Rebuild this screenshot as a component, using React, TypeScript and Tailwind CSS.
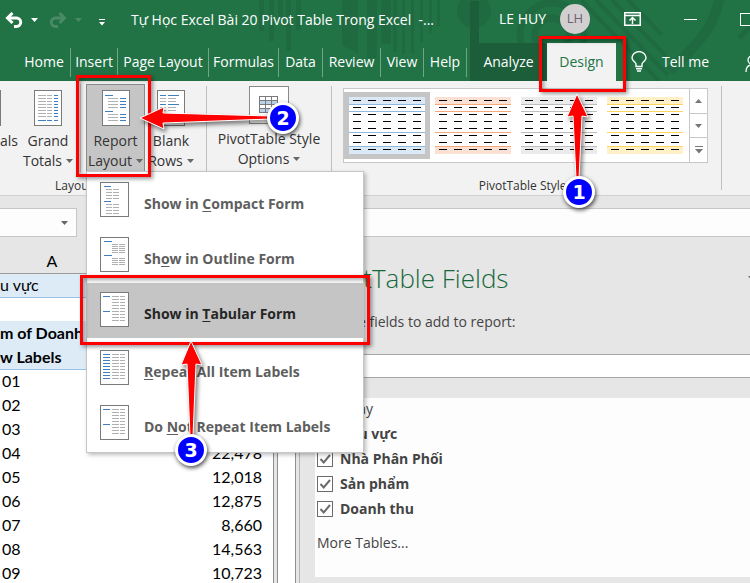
import { useState } from "react";
import type { ReactNode } from "react";
import clsx from "clsx";

type Bar = [x: number, y: number, w: number, blue?: boolean];

const rows = (x: number, w: number, ys: number[], blue = false): Bar[] =>
  ys.map((y) => [x, y, w, blue]);

const grandTotals: Bar[] = [
  ...rows(4, 8, [5, 8, 11, 14, 17, 20, 23, 26]),
  ...rows(13, 5, [5, 8, 11, 14, 17, 20, 23, 26]),
  ...rows(20, 4, [5, 8, 11, 14, 17, 20, 23, 26, 30], true),
  [4, 30, 8, true],
  [13, 30, 5, true],
];

const reportLayout: Bar[] = [
  [3, 5, 8, true],
  [3, 21, 8, true],
  ...rows(6, 10, [8, 11, 14, 17, 24, 27, 30]),
  ...rows(18, 6, [8, 11, 14, 17, 24, 27, 30], true),
];

const blankRows: Bar[] = [
  ...rows(3, 6, [5, 14], true),
  ...rows(11, 11, [5, 14], true),
  ...rows(3, 6, [8, 11, 17, 20, 26, 29]),
  ...rows(11, 8, [8, 11, 17, 20, 26, 29]),
];

const compact: Bar[] = [
  [4, 4, 7, true],
  [4, 19, 7, true],
  ...rows(6, 6, [7, 10, 13, 16, 22, 25, 28, 31]),
  ...rows(13, 6, [7, 10, 13, 16, 22, 25, 28, 31]),
];

const outline: Bar[] = [
  [4, 4, 8, true],
  [4, 18, 8, true],
  ...rows(12, 6, [7, 9, 11, 13, 15, 21, 23, 25, 27]),
  ...rows(19, 6, [7, 9, 11, 13, 15, 21, 23, 25, 27]),
];

const tabularYs = [4, 7, 10, 13, 16, 19, 22, 25, 28];

const tabular: Bar[] = [
  [3, 4, 7, true],
  [3, 19, 7, true],
  ...rows(12, 7, tabularYs),
  ...rows(20, 5, tabularYs),
];

const repeatAll: Bar[] = [
  ...rows(3, 7, tabularYs, true),
  ...rows(12, 7, tabularYs),
  ...rows(20, 5, tabularYs),
];

function SheetIcon({ bars, w = 28, h = 36 }: { bars: Bar[]; w?: number; h?: number }) {
  return (
    <svg width={w} height={h} viewBox={`0 0 ${w} ${h}`} className="shrink-0" shapeRendering="crispEdges" aria-hidden="true">
      <rect x="0.5" y="0.5" width={w - 1} height={h - 1} fill="#fff" stroke="#7a7a7a" />
      {bars.map(([x, y, bw, blue], i) => (
        <rect key={i} x={x} y={y} width={bw} height="1" fill={blue ? "#3f7fbf" : "#b0b0b0"} />
      ))}
    </svg>
  );
}

function Caret({ className = "text-[#666]" }: { className?: string }) {
  return (
    <svg width="7" height="4" viewBox="0 0 7 4" className={clsx("shrink-0", className)} aria-hidden="true">
      <path d="M0 0h7L3.500 4z" fill="currentColor" />
    </svg>
  );
}

const tabs: { name: string; w: string }[] = [
  { name: "Home", w: "w-[53px]" },
  { name: "Insert", w: "w-[47px]" },
  { name: "Page Layout", w: "w-[91px]" },
  { name: "Formulas", w: "w-[70px]" },
  { name: "Data", w: "w-[44px]" },
  { name: "Review", w: "w-[58px]" },
  { name: "View", w: "w-[43px]" },
  { name: "Help", w: "w-[43px]" },
];

function HeaderArt() {
  return (
    <svg className="absolute inset-0 h-full w-[750px]" viewBox="0 0 750 81" fill="none" aria-hidden="true">
      <g fill="#1f6a40">
        <path d="M259 0h5v31h-5zM269 0h5v41h-5zM278 0h5v22h-5zM286 0h5v51h-5zM296 0h5v30h-5z" />
        <path d="M342 0h16v54l-16-9z" />
        <path d="M367 0h10v58h-10zM381 0h10v44h-10zM393 0h4v52h-4zM402 0h3v54h-3zM411 0h3v53h-3zM420 0h3v42h-3zM429 0h3v33h-3zM437 0h3v26h-3z" />
        <circle cx="474" cy="11" r="17" />
        <path d="M470 1h9v42h-9z" fill="#1b5e39" />
      </g>
      <g stroke="#1f6a40">
        <circle cx="552" cy="35" r="32" strokeWidth="7" />
        <circle cx="552" cy="35" r="17" strokeWidth="7" />
        <path d="M581 0l78 81M596 0l72 75M612 0l54 56M628 0l34 35" strokeWidth="4" />
        <path d="M720 -8c-3 30-15 45-50 79" strokeWidth="10" />
        <path d="M739 38l14-14" strokeWidth="5" />
      </g>
    </svg>
  );
}

function TitleBar() {
  return (
    <div className="relative flex h-[43px] items-start">
      <div className="flex h-10 w-[131px] shrink-0 items-center pl-[5px]">
        <button aria-label="Undo">
          <svg width="18" height="16" viewBox="0 0 18 16" fill="none" stroke="#fff" strokeWidth="3" aria-hidden="true">
            <path d="M3 6h8.500a4.200 4.200 0 0 1 0 8.400H9" />
            <path d="M7.500 1L2.500 6l5 5" />
          </svg>
        </button>
        <Caret className="ml-2 text-white" />
        <button aria-label="Redo" disabled className="ml-[11px]">
          <svg width="18" height="16" viewBox="0 0 18 16" fill="none" stroke="#4a8a67" strokeWidth="3" aria-hidden="true">
            <path d="M15 6H6.500a4.200 4.200 0 0 0 0 8.400H9" />
            <path d="M10.500 1l5 5-5 5" />
          </svg>
        </button>
        <Caret className="ml-2 text-[#4a8a67]" />
        <button aria-label="Customize Quick Access Toolbar" className="mt-1 ml-[17px]">
          <svg width="6" height="7" viewBox="0 0 6 7" fill="#fff" aria-hidden="true">
            <path d="M0 0h6v1H0zM0 3h6L3 6.500z" />
          </svg>
        </button>
      </div>
      <h1 className="h-10 w-[368px] shrink-0 whitespace-pre text-[14px] leading-10">
        Tự Học Excel Bài 20 Pivot Table Trong Excel {" "}-...
      </h1>
      <span className="h-10 w-[61px] shrink-0 text-[14px] leading-[38px]">LE HUY</span>
      <span className="mt-1 flex h-[30px] w-[30px] shrink-0 items-center justify-center rounded-full bg-[#d2cfd0] text-[13px] text-[#6b5f70]">
        LH
      </span>
      <div className="ml-auto flex h-[38px] w-[160px] shrink-0 items-center pl-[34px]">
        <button aria-label="Ribbon Display Options">
          <svg width="17" height="14" viewBox="0 0 17 14" fill="none" stroke="#fff" aria-hidden="true">
            <path d="M.75.75h15.500v12.500H.75zM1 3.500h15" strokeWidth="1.500" />
            <path d="M8.500 12V5.500M5.500 8.500l3-3 3 3" strokeWidth="1.500" />
          </svg>
        </button>
        <button aria-label="Minimize" className="ml-[43px]">
          <span className="block h-px w-[13px] bg-white" />
        </button>
        <button aria-label="Maximize" className="ml-[43px]">
          <span className="block h-[13px] w-[13px] border border-white" />
        </button>
      </div>
    </div>
  );
}

function TabBar() {
  return (
    <div className="relative flex h-[38px] items-stretch text-[14px]">
      <nav className="flex shrink-0 items-center pl-[18px]">
        {tabs.map((t) => (
          <button key={t.name} className={clsx("h-[29px] border-r border-[#6fa588] pb-[2px] whitespace-nowrap", t.w)}>
            {t.name}
          </button>
        ))}
      </nav>
      <div className="ml-[3px] flex shrink-0 bg-[#1b5e39] *:pb-[2px]">
        <button className="w-[77px]">Analyze</button>
        <button className="w-[69px] bg-[#f2f2f2] text-[#217346]">Design</button>
      </div>
      <button className="ml-[15px] flex shrink-0 items-center gap-[15px] pb-[2px]">
        <svg width="16" height="21" viewBox="0 0 16 21" fill="none" stroke="#fff" strokeWidth="1.400" aria-hidden="true">
          <path d="M5 15.500v-2.500C4.500 11 1 10 1 6.800a6.800 6 0 0 1 14 0C15 10 11.500 11 11 13v2.500zM5 17.800h6M6 20h4" />
        </svg>
        Tell me
      </button>
      <button aria-label="Share" className="ml-auto w-[5px] shrink-0 overflow-hidden pt-1">
        <svg width="14" height="18" viewBox="0 0 14 18" fill="none" stroke="#fff" strokeWidth="1.300" className="max-w-none" aria-hidden="true">
          <circle cx="7" cy="5" r="4" />
          <path d="M1 17c0-5 3-7 6-7s6 2 6 7" />
        </svg>
      </button>
    </div>
  );
}

function RibbonButton({ icon, top, bottom, active, width }: {
  icon: ReactNode;
  top: string;
  bottom: string;
  active?: boolean;
  width: string;
}) {
  return (
    <button
      className={clsx(
        "flex h-[88px] shrink-0 flex-col items-center border pt-[5px] text-[14px] leading-5 whitespace-nowrap",
        width,
        active ? "border-[#8a8a8a] bg-[#c5c5c5]" : "border-transparent",
      )}
    >
      {icon}
      <span className="mt-[5px]">{top}</span>
      <span className="flex items-center gap-1">
        {bottom}
        <Caret />
      </span>
    </button>
  );
}

const styles = [
  { name: "Light blue", tint: "#dbe8f5", line: "#8fb8de" },
  { name: "Light orange", tint: "#fbe1d3", line: "#f2a878" },
  { name: "Light gray", tint: "#ebebeb", line: "#bdbdbd" },
  { name: "Light gold", tint: "#fff0c8", line: "#fbd55c" },
];

function StyleSwatch({ tint, line }: { tint: string; line: string }) {
  return (
    <svg width="76" height="57" viewBox="0 0 76 57" shapeRendering="crispEdges" aria-hidden="true">
      <rect width="76" height="57" fill="#fff" />
      <rect width="76" height="7" fill={tint} />
      <rect y="50" width="76" height="7" fill={tint} />
      {[7, 14, 35, 49].map((y) => (
        <rect key={y} y={y} width="76" height="1" fill={line} />
      ))}
      {[3, 10, 17, 24, 31, 38, 45, 52].map((y) =>
        [4, 19, 34, 49, 64].map((x) => <rect key={`${x}-${y}`} x={x} y={y} width="8" height="1" fill="#000" />),
      )}
    </svg>
  );
}

function Ribbon() {
  const [picked, setPicked] = useState("Light blue");

  return (
    <div className="flex h-[115px] shrink-0 items-start overflow-hidden border-b border-[#d0d0d0] bg-[#f2f2f2] pt-[3px] text-[#333]">
      <section className="flex w-[206px] shrink-0 flex-col">
        <div className="flex">
          <button className="flex h-[88px] w-[21px] shrink-0 flex-col items-start pt-[6px] text-[14px] leading-5">
            <span className="h-[36px] w-px bg-[#7a7a7a]" />
            <span className="mt-[5px]">als</span>
          </button>
          <RibbonButton width="w-[54px]" icon={<SheetIcon bars={grandTotals} />} top="Grand" bottom="Totals" />
          <span className="mx-[5px] h-[88px] w-px bg-[#c8c8c8]" />
          <RibbonButton width="w-[59px]" icon={<SheetIcon bars={reportLayout} />} top="Report" bottom="Layout" active />
          <RibbonButton width="w-[52px]" icon={<SheetIcon bars={blankRows} />} top="Blank" bottom="Rows" />
        </div>
        <h2 className="mt-[4px] ml-[55px] text-[12px] leading-5">Layout</h2>
      </section>
      <span className="mt-[2px] h-[104px] w-px shrink-0 bg-[#c0c0c0]" />
      <section className="w-[124px] shrink-0">
        <RibbonButton
          width="w-full"
          top="PivotTable Style"
          bottom="Options"
          icon={
            <svg width="40" height="38" viewBox="0 0 40 38" className="-mt-[4px]" shapeRendering="crispEdges" aria-hidden="true">
              <path d="M.5.5h39v37H.5z" fill="#fff" stroke="#8a8a8a" />
              <rect x="10" y="10" width="19" height="17" fill="#7a7a7a" />
              <path d="M11 11h5v3h-5zM17 11h5v3h-5zM23 11h5v3h-5zM11 19h5v3h-5zM17 19h5v3h-5zM23 19h5v3h-5z" fill="#fff" />
              <path d="M11 15h5v3h-5zM17 15h5v3h-5zM23 15h5v3h-5zM11 23h5v3h-5zM17 23h5v3h-5zM23 23h5v3h-5z" fill="#b9d1ea" />
            </svg>
          }
        />
      </section>
      <span className="mt-[2px] h-[104px] w-px shrink-0 bg-[#c0c0c0]" />
      <section className="ml-[11px] flex w-[365px] shrink-0 flex-col">
        <div className="mt-[4px] flex h-[75px] border border-[#c8c8c8] bg-white">
          <div className="flex flex-1 items-start pt-[3px]">
            {styles.map((s) => (
              <button
                key={s.name}
                aria-label={s.name}
                onClick={() => setPicked(s.name)}
                className={clsx("border-[5px]", picked === s.name ? "border-[#c5c5c5]" : "border-white")}
              >
                <StyleSwatch tint={s.tint} line={s.line} />
              </button>
            ))}
          </div>
          <div className="flex w-[18px] shrink-0 flex-col divide-y divide-[#c8c8c8] border-l border-[#c8c8c8]">
            <button aria-label="Previous row" className="flex flex-1 items-center justify-center">
              <Caret className="rotate-180 text-[#777]" />
            </button>
            <button aria-label="Next row" className="flex flex-1 items-center justify-center">
              <Caret className="text-[#777]" />
            </button>
            <button aria-label="More styles" className="flex flex-1 items-center justify-center">
              <svg width="8" height="8" viewBox="0 0 8 8" fill="#777" aria-hidden="true">
                <path d="M0 0h8v1H0zM0 3h8L4 7.500z" />
              </svg>
            </button>
          </div>
        </div>
        <h2 className="mt-[13px] text-center text-[12px] leading-5">PivotTable Styles</h2>
      </section>
      <span className="mt-[2px] ml-[13px] h-[104px] w-px shrink-0 bg-[#c0c0c0]" />
    </div>
  );
}

const cells = [
  ["01", ""],
  ["02", ""],
  ["03", ""],
  ["04", "22,478"],
  ["05", "12,018"],
  ["06", "12,875"],
  ["07", "8,660"],
  ["08", "14,563"],
  ["09", "10,723"],
];

function Sheet() {
  return (
    <div className="w-[274px] shrink-0 overflow-hidden border-r border-[#8f8f8f] bg-white">
      <table className="w-full table-fixed border-collapse font-[Lato,'Open_Sans',sans-serif] text-[16px] leading-[22px] text-black">
        <thead>
          <tr className="h-[36px] border-b border-[#9b9b9b] bg-[#e6e6e6]">
            <th className="w-[104px] pt-[13px] font-normal">A</th>
            <th />
          </tr>
        </thead>
        <tbody>
          <tr className="h-6 border-b border-[#9cc2e5] bg-[#ddebf7]">
            <td>u vực</td>
            <td />
          </tr>
          <tr className="h-6">
            <td colSpan={2} />
          </tr>
          <tr className="h-6 bg-[#ddebf7] font-bold">
            <td className="whitespace-nowrap">m of Doanh</td>
            <td />
          </tr>
          <tr className="h-6 border-b border-[#9cc2e5] bg-[#ddebf7] font-bold">
            <td>w Labels</td>
            <td />
          </tr>
          {cells.map(([label, value]) => (
            <tr key={label} className="h-6">
              <td className="pl-[2px]">{label}</td>
              <td className="pr-[11px] text-right">{value}</td>
            </tr>
          ))}
        </tbody>
      </table>
    </div>
  );
}

const initialFields = [
  { name: "Ngày", on: false },
  { name: "Khu vực", on: true },
  { name: "Nhà Phân Phối", on: true },
  { name: "Sản phẩm", on: true },
  { name: "Doanh thu", on: true },
];

function FieldsPane() {
  const [fields, setFields] = useState(initialFields);

  const toggle = (name: string) =>
    setFields(fields.map((f) => (f.name === name ? { ...f, on: !f.on } : f)));

  return (
    <aside className="flex min-w-0 flex-1 flex-col border-l border-[#b5b5b5] bg-[#e6e6e6] pl-[15px] text-[#444]">
      <div className="mt-[21px] flex h-10 items-center justify-between overflow-hidden">
        <h2 className="text-[26px] font-light text-[#17693b]">PivotTable Fields</h2>
        <button aria-label="Task pane options" className="w-[2px] overflow-hidden">
          <Caret />
        </button>
      </div>
      <p className="mt-[14px] pl-[2px] text-[14px] leading-5">Choose fields to add to report:</p>
      <input
        aria-label="Search fields"
        className="mt-[22px] h-6 w-full shrink-0 border-y border-[#a6a6a6] bg-white px-2 text-[14px] outline-none"
      />
      <div className="mt-5 flex-1 bg-[#fdfdfd] pl-[2px] text-[14px]">
        <ul>
          {fields.map((f) => (
            <li key={f.name} className="flex h-[25px] items-center pb-1">
              <label className={clsx("flex items-center gap-[7px]", f.on && "font-bold")}>
                <span className="grid">
                  <input
                    type="checkbox"
                    checked={f.on}
                    onChange={() => toggle(f.name)}
                    className="col-start-1 row-start-1 h-4 w-4 appearance-none border border-[#6b6b6b] bg-white"
                  />
                  {f.on && (
                    <svg
                      className="pointer-events-none col-start-1 row-start-1"
                      width="16"
                      height="16"
                      viewBox="0 0 16 16"
                      fill="none"
                      stroke="#6b6b6b"
                      strokeWidth="2"
                      aria-hidden="true"
                    >
                      <path d="M3.500 8l3.200 3.500L13 4" />
                    </svg>
                  )}
                </span>
                {f.name}
              </label>
            </li>
          ))}
        </ul>
        <a href="#more" className="mt-[10px] inline-block leading-5">
          More Tables...
        </a>
      </div>
      <div className="h-[6px] shrink-0" />
    </aside>
  );
}

const menuItems: { pre: string; key: string; post: string; bars: Bar[] }[] = [
  { pre: "Show in ", key: "C", post: "ompact Form", bars: compact },
  { pre: "Sh", key: "o", post: "w in Outline Form", bars: outline },
  { pre: "Show in ", key: "T", post: "abular Form", bars: tabular },
  { pre: "", key: "R", post: "epeat All Item Labels", bars: repeatAll },
  { pre: "Do ", key: "N", post: "ot Repeat Item Labels", bars: tabular },
];

function LayoutMenu() {
  return (
    <div
      role="menu"
      className="absolute top-[171px] left-[86px] w-[278px] border border-[#c6c6c6] bg-white py-px shadow-[2px_2px_4px_rgba(0,0,0,0.25)]"
    >
      {menuItems.map((m, i) => (
        <button
          key={m.key}
          role="menuitem"
          className={clsx(
            "flex h-[55px] w-full items-center gap-[15px] pb-[2px] pl-[13px] text-left text-[14px] font-bold whitespace-nowrap",
            i === 2 ? "bg-[#c5c5c5] text-[#262626]" : "text-[#5e5e5e]",
            i === 3 && "mt-[3px]",
          )}
        >
          <SheetIcon bars={m.bars} w={29} h={35} />
          <span className="pt-[8px]">
            {m.pre}
            <u className="underline-offset-2">{m.key}</u>
            {m.post}
          </span>
        </button>
      ))}
    </div>
  );
}

function Frame({ className }: { className: string }) {
  return (
    <div
      className={clsx(
        "pointer-events-none absolute border-[3px] border-[#fe0000] shadow-[2px_2px_4px_rgba(0,0,0,0.4),inset_2px_2px_4px_rgba(0,0,0,0.35)]",
        className,
      )}
    />
  );
}

function Step({ n, className }: { n: number; className: string }) {
  return (
    <span
      className={clsx(
        "absolute flex h-8 w-8 items-center justify-center rounded-full border-[3px] border-white bg-[#0000fe] font-['DejaVu_Sans',sans-serif] text-[19px] leading-none font-bold text-white shadow-[1px_2px_4px_rgba(0,0,0,0.7)]",
        className,
      )}
    >
      {n}
    </span>
  );
}

function Callouts() {
  return (
    <>
      <Frame className="top-[75px] left-[76px] h-[102px] w-[75px]" />
      <Frame className="top-[36px] left-[539px] h-[56px] w-[87px]" />
      <Frame className="top-[275px] left-[80px] h-[70px] w-[290px]" />
      <svg
        className="pointer-events-none absolute top-0 left-0 drop-shadow-[2px_3px_2px_rgba(0,0,0,0.5)]"
        width="640"
        height="460"
        viewBox="0 0 640 460"
        fill="#fe0000"
        stroke="#fff"
        strokeWidth="1"
        aria-hidden="true"
      >
        <path d="M140 118L164 107L163 113L270 116V119L163 123L164 129Z" />
        <path d="M577 94L588 117L582 116L579 178H576L573 116L567 117Z" />
        <path d="M191 341L202 365L196 364L193 436H190L187 364L181 365Z" />
      </svg>
      <Step n={1} className="top-[176px] left-[563px]" />
      <Step n={2} className="top-[102px] left-[267px]" />
      <Step n={3} className="top-[434px] left-[175px]" />
    </>
  );
}

export default function App() {
  return (
    <div className="relative flex h-screen w-full flex-col overflow-hidden bg-[#e6e6e6] font-['Open_Sans','Noto_Sans',sans-serif]">
      <header className="relative shrink-0 overflow-hidden bg-[#217346] text-white">
        <HeaderArt />
        <TitleBar />
        <TabBar />
      </header>
      <Ribbon />
      <div className="mt-[12px] flex h-[29px] shrink-0 gap-4">
        <div className="flex w-[77px] items-center justify-end border border-l-0 border-[#c6c6c6] bg-[#fdfdfd] pr-2">
          <input aria-label="Name box" className="w-0 flex-1 bg-transparent outline-none" />
          <button aria-label="Open name list">
            <Caret />
          </button>
        </div>
        <input aria-label="Formula bar" className="min-w-0 flex-1 border-y border-[#c6c6c6] bg-[#fdfdfd] outline-none" />
      </div>
      <main className="flex min-h-0 flex-1">
        <Sheet />
        <div className="w-[4px] shrink-0 border-r border-[#8f8f8f]" />
        <div className="w-[18px] shrink-0 border-r border-[#8f8f8f] bg-white" />
        <div className="w-[3px] shrink-0" />
        <FieldsPane />
      </main>
      <LayoutMenu />
      <Callouts />
    </div>
  );
}
